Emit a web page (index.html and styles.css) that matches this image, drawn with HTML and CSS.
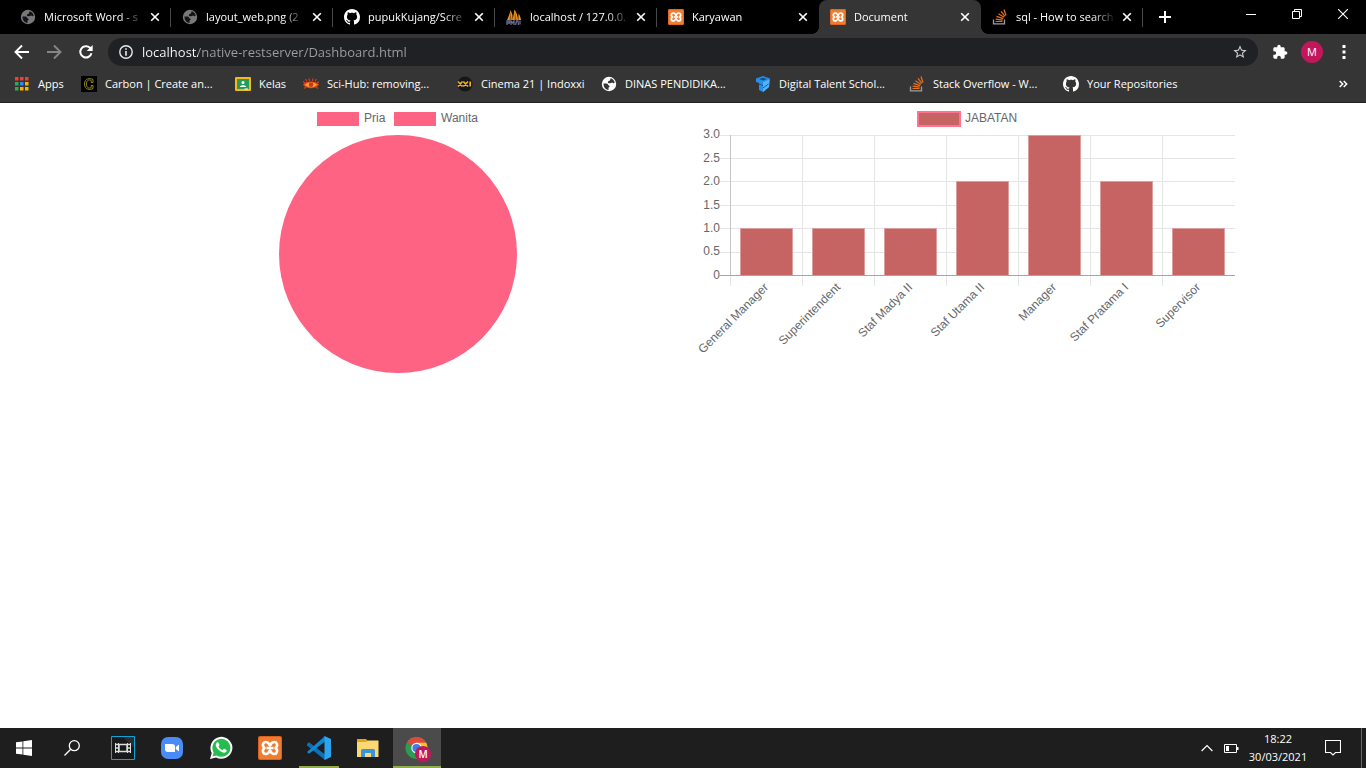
FILE: index.html
```html
<!DOCTYPE html>
<html lang="id">
<head>
<meta charset="utf-8">
<title>Document</title>
<link rel="stylesheet" href="styles.css">
</head>
<body>
<svg class="sprite" aria-hidden="true">
  <symbol id="globe" viewBox="0 0 16 16"><circle cx="8" cy="8" r="7.200" fill="currentColor"/><path d="M2.500 7.500H5.500C7 7.500 7 9.500 8.300 9.700 9 10 8.500 11.300 7.500 11.500V14C4.500 13.500 2.300 11 2.500 7.500ZM9.500 2.200C11.500 2.700 13.300 4.500 13.700 6.500 13 7.500 12 7.200 11.300 6.500 10 6.500 9.500 7.500 8 7.300 6.500 7 6.500 5.500 7.800 5 9 4.700 9.500 3.500 9.500 2.200Z" class="globe-land"/></symbol>
  <symbol id="github" viewBox="0 0 16 16"><path fill="#fff" d="M8 0C3.58 0 0 3.58 0 8c0 3.54 2.29 6.53 5.47 7.59.4.07.55-.17.55-.38 0-.19-.01-.82-.01-1.49-2.01.37-2.53-.49-2.69-.94-.09-.23-.48-.94-.82-1.13-.28-.15-.68-.52-.01-.53.63-.01 1.08.58 1.23.82.72 1.21 1.87.87 2.33.66.07-.52.28-.87.51-1.07-1.78-.2-3.64-.89-3.64-3.95 0-.87.31-1.59.82-2.15-.08-.2-.36-1.02.08-2.12 0 0 .67-.21 2.2.82.64-.18 1.32-.27 2-.27s1.36.09 2 .27c1.53-1.04 2.2-.82 2.2-.82.44 1.1.16 1.92.08 2.12.51.56.82 1.27.82 2.15 0 3.07-1.87 3.75-3.65 3.95.29.25.54.73.54 1.48 0 1.07-.01 1.93-.01 2.2 0 .21.15.46.55.38A8.01 8.01 0 0 0 16 8c0-4.42-3.58-8-8-8z"/></symbol>
  <symbol id="pma" viewBox="0 0 16 16"><path d="M1 11C2.500 8 4 4 4.500 1L6.500 6V11ZM6.500 11C7.500 7 8 3.500 8.500 0.500 10.500 3 11.800 7 12 11ZM12.300 11 12.500 4.500C13.700 6 14.800 8.500 15 11Z" fill="#ef9320"/><path d="M4.500 2.500 5.500 11H3.500ZM9 2.500 10.500 11H8.500Z" fill="#9c5415"/><path d="M1 16V12H3.500V14H1M5 16V12L6.500 14 8 12V16M9.500 16 10.500 12H12L12.500 16M14 11.500V15.500" fill="none" stroke="#666c92" stroke-width="1.300"/></symbol>
  <symbol id="xampp" viewBox="0 0 24 24"><rect width="24" height="24" rx="2" fill="#d9621f"/><rect x="1" y="1" width="22" height="22" rx="2" fill="#f07c30"/><path d="M9 6.300C5 5 3.500 9.500 6.500 12 3.500 14.500 5 19 9 17.700 11.500 17 11 14.500 12 14.500S12.500 17 15 17.700C19 19 20.500 14.500 17.500 12 20.500 9.500 19 5 15 6.300 12.500 7 13 9.500 12 9.500S11.500 7 9 6.300ZM8.500 12H15.500" fill="none" stroke="#fff" stroke-width="2.600" stroke-linejoin="round"/></symbol>
  <symbol id="stack" viewBox="0 0 16 16"><path d="M1.500 10.500V14.800H12.500V10.500" fill="none" stroke="#9c9da0" stroke-width="1.300"/><path d="M3.500 12.500H10.500M3.700 10.200 10.600 11.200M4.500 7.400 11.200 9.600M6.400 4.700 12 8.300M9 2.300 13 7.300M12 0.500 14 6.500" stroke="#e8711c" stroke-width="1.200"/></symbol>
  <symbol id="close" viewBox="0 0 10 10"><path d="M1.200 1.200 8.800 8.800M8.800 1.200 1.200 8.800" stroke="#fff" stroke-width="1.600"/></symbol>
</svg>

<header class="browser">
  <div class="tabstrip">
    <nav class="tabs" aria-label="Tab">
      <div class="tab"><svg class="fav globe-dark"><use href="#globe"/></svg><a href="#" class="tab-title">Microsoft Word - s</a><button class="tab-close" aria-label="Tutup"><svg><use href="#close"/></svg></button></div>
      <div class="tab"><svg class="fav globe-dark"><use href="#globe"/></svg><a href="#" class="tab-title">layout_web.png (2</a><button class="tab-close" aria-label="Tutup"><svg><use href="#close"/></svg></button></div>
      <div class="tab"><svg class="fav"><use href="#github"/></svg><a href="#" class="tab-title">pupukKujang/Scre</a><button class="tab-close" aria-label="Tutup"><svg><use href="#close"/></svg></button></div>
      <div class="tab"><svg class="fav"><use href="#pma"/></svg><a href="#" class="tab-title">localhost / 127.0.0.</a><button class="tab-close" aria-label="Tutup"><svg><use href="#close"/></svg></button></div>
      <div class="tab plain"><svg class="fav"><use href="#xampp"/></svg><a href="#" class="tab-title">Karyawan</a><button class="tab-close" aria-label="Tutup"><svg><use href="#close"/></svg></button></div>
      <div class="tab active"><svg class="fav"><use href="#xampp"/></svg><a href="#" class="tab-title">Document</a><button class="tab-close" aria-label="Tutup"><svg><use href="#close"/></svg></button></div>
      <div class="tab"><svg class="fav"><use href="#stack"/></svg><a href="#" class="tab-title">sql - How to search</a><button class="tab-close" aria-label="Tutup"><svg><use href="#close"/></svg></button></div>
    </nav>
    <button class="new-tab" aria-label="Tab baru"><svg viewBox="0 0 12 12"><path d="M6 0V12M0 6H12" stroke="#fff" stroke-width="2"/></svg></button>
    <div class="window-controls">
      <button aria-label="Kecilkan"><svg viewBox="0 0 10 10"><path d="M0 5.500H10" stroke="#fff"/></svg></button>
      <button aria-label="Pulihkan"><svg viewBox="0 0 10 10"><path d="M2.500 2.500V0.500H9.500V7.500H7.500M0.500 2.500H7.500V9.500H0.500Z" fill="none" stroke="#fff"/></svg></button>
      <button aria-label="Tutup jendela"><svg viewBox="0 0 10 10"><path d="M0 0 10 10M10 0 0 10" stroke="#fff" stroke-width="1.100"/></svg></button>
    </div>
  </div>

  <div class="toolbar">
    <button class="tool" aria-label="Kembali"><svg viewBox="0 0 16 16"><path d="M15 8H2M8 1.500 1.500 8 8 14.500" fill="none" stroke="#fff" stroke-width="1.900"/></svg></button>
    <button class="tool" aria-label="Maju"><svg viewBox="0 0 16 16"><path d="M1 8H14M8 1.500 14.500 8 8 14.500" fill="none" stroke="#868686" stroke-width="1.900"/></svg></button>
    <button class="tool" aria-label="Muat ulang"><svg viewBox="0 0 16 16"><path d="M13.500 9.300A5.700 5.700 0 1 1 12 3.800L13 5" fill="none" stroke="#fff" stroke-width="2"/><path d="M14.700 1V7H8.700Z" fill="#fff"/></svg></button>
    <div class="omnibox">
      <svg class="info" viewBox="0 0 14 14"><circle cx="7" cy="7" r="6.200" fill="none" stroke="#e8eaed" stroke-width="1.400"/><path d="M7 3.200V4.800M7 6V10.700" stroke="#e8eaed" stroke-width="1.600"/></svg>
      <input class="url" type="text" aria-label="Alamat" value="localhost/native-restserver/Dashboard.html">
      <button class="star" aria-label="Bookmark"><svg viewBox="0 0 24 24"><path fill="#d0d0d0" d="M22 9.240l-7.190-.62L12 2 9.190 8.630 2 9.240l5.460 4.730L5.820 21 12 17.270 18.180 21l-1.630-7.030L22 9.240zM12 15.400l-3.760 2.270 1-4.280-3.320-2.880 4.380-.38L12 6.100l1.710 4.040 4.380.38-3.320 2.880 1 4.280L12 15.400z"/></svg></button>
    </div>
    <button class="ext" aria-label="Ekstensi"><svg viewBox="0 0 24 24"><path fill="#fff" d="M20.500 11H19V7c0-1.100-.9-2-2-2h-4V3.500C13 2.120 11.880 1 10.500 1S8 2.120 8 3.500V5H4c-1.100 0-1.990.9-1.990 2v3.800H3.500c1.490 0 2.700 1.210 2.700 2.700s-1.210 2.700-2.700 2.700H2V20c0 1.100.9 2 2 2h3.800v-1.500c0-1.490 1.210-2.700 2.700-2.700 1.490 0 2.700 1.210 2.700 2.700V22H17c1.100 0 2-.9 2-2v-4h1.500c1.380 0 2.500-1.120 2.500-2.500S21.880 11 20.500 11z"/></svg></button>
    <button class="avatar">M</button>
    <button class="more" aria-label="Menu"><svg viewBox="0 0 4 14"><path d="M.5 0h3v3h-3zM.5 5.500h3v3h-3zM.5 11h3v3h-3z" fill="#fff"/></svg></button>
  </div>

  <nav class="bookmarks" aria-label="Bookmark">
    <a href="#" class="mark mark-short"><svg viewBox="0 0 16 16"><path d="M1 1h3.500v3.500H1zM6 1h3.500v3.500H6zM11 1h3.500v3.500h-3.500z" fill="#ea4335"/><path d="M1 6h3.500v3.500H1zM1 11h3.500v3.500H1z" fill="#34a853"/><path d="M6 6h3.500v3.500H6z" fill="#2b8af5"/><path d="M11 6h3.500v3.500h-3.500zM6 11h3.500v3.500H6zM11 11h3.500v3.500h-3.500z" fill="#fbb105"/></svg>Apps</a>
    <a href="#" class="mark mark-long"><svg viewBox="0 0 16 16"><path d="M0 0H16V16H0Z" fill="#000"/><path d="M12 6.500V3.600C9.500 1.800 3.500 2 3.500 8S9.500 14.200 12 12.400V9.500H10.200V11.500C8.400 12.700 5.400 12 5.400 8S8.400 3.300 10.200 4.500V6.500Z" fill="none" stroke="#a39522" stroke-width=".9"/></svg>Carbon | Create an...</a>
    <a href="#" class="mark mark-kelas"><svg viewBox="0 0 16 16"><rect y="1" width="16" height="14" rx="1" fill="#f6b814"/><path d="M2 3H14V13H2Z" fill="#259a5b"/><circle cx="8" cy="6.500" r="1.500" fill="#fff"/><path d="M4.800 11C5 8.500 11 8.500 11.200 11Z" fill="#fff"/><path d="M9.500 12.500H13V13.500H9.500Z" fill="#fff"/></svg>Kelas</a>
    <a href="#" class="mark mark-long"><svg viewBox="0 0 16 16"><path d="M0 8.500C3 4.500 13 4.500 16 8.500 13 13.500 3 13.500 0 8.500Z" fill="#e7491e"/><path d="M4 5.500 2.500 3M6.500 5 6 2.300M9.500 5 10 2.300M12 5.500 13.500 3M2 7 0 5.500M14 7 16 5.500M3 11 1 12.500M13 11 15 12.500" stroke="#d83b1b" stroke-width="1.200"/><path d="M2 8.700C5 5.800 11 5.800 14 8.700 11 12 5 12 2 8.700Z" fill="#f6a623"/><circle cx="8" cy="8.700" r="2.300" fill="#c9381a"/></svg>Sci-Hub: removing...</a>
    <a href="#" class="mark mark-mid"><svg viewBox="0 0 16 16"><circle cx="8" cy="8" r="7.500" fill="#171717"/><path d="M1 5.500 5.500 10.500M5.500 5.500 1 10.500M6.300 5.500 11 10.500M11 5.500 6.300 10.500M13.200 5.500V10.500" stroke="#efad24" stroke-width="1.700"/></svg>Cinema 21 | Indoxxi</a>
    <a href="#" class="mark mark-long globe-light"><svg><use href="#globe"/></svg>DINAS PENDIDIKA...</a>
    <a href="#" class="mark mark-long"><svg viewBox="0 0 16 16"><path d="M1 2.500 8 0 15 2.500 14 11 8 16 4 14V7L1 6Z" fill="#248ee8"/><path d="M4 3 8 1.700 12 3 8 4.500Z" fill="#174e80"/><path d="M8 6 14.500 3.500 14 11 8 16Z" fill="#53b2f8"/><path d="M4 8 8 9.500M8 12 13.500 8" stroke="#0d5aa6"/></svg>Digital Talent Schol...</a>
    <a href="#" class="mark mark-long"><svg><use href="#stack"/></svg>Stack Overflow - W...</a>
    <a href="#" class="mark"><svg><use href="#github"/></svg>Your Repositories</a>
    <button class="overflow" aria-label="Bookmark lainnya"><svg viewBox="0 0 9 8"><path d="M.7 1 3.700 4 .7 7M4.700 1 7.700 4 4.700 7" fill="none" stroke="#fff" stroke-width="1.500"/></svg></button>
  </nav>
</header>

<main class="container">
  <section class="chart">
    <svg viewBox="0 0 540 270" role="img" aria-label="Pria dan Wanita">
      <path class="pink" d="M189 9H231V23H189ZM266 9H308V23H266Z"/>
      <text x="236" y="19">Pria</text>
      <text x="313" y="19">Wanita</text>
      <circle class="pink" cx="270" cy="151" r="119"/>
    </svg>
  </section>
  <section class="chart">
    <svg viewBox="0 0 540 270" role="img" aria-label="Jabatan">
      <rect class="legend-box" x="220" y="9" width="42" height="14"/>
      <text x="267" y="19">JABATAN</text>
      <path class="grid" d="M22 32.500H537M22 55.500H537M22 78.500H537M22 102.500H537M22 125.500H537M22 149.500H537M104.500 32V183M176.500 32V183M248.500 32V183M320.500 32V183M392.500 32V183M464.500 32V183M32.500 173V183"/>
      <path class="axis-y" d="M32.500 32V172"/>
      <g class="bars">
        <path d="M42.500 172V125.500H94.500V172"/>
        <path d="M114.500 172V125.500H166.500V172"/>
        <path d="M186.500 172V125.500H238.500V172"/>
        <path d="M258.500 172V78.500H310.500V172"/>
        <path d="M330.500 172V32.500H382.500V172"/>
        <path d="M402.500 172V78.500H454.500V172"/>
        <path d="M474.500 172V125.500H526.500V172"/>
      </g>
      <path class="axis-x" d="M22 172.500H537"/>
      <g class="ticks">
        <text x="22" y="35">3.0</text><text x="22" y="59">2.5</text><text x="22" y="82">2.0</text><text x="22" y="106">1.5</text><text x="22" y="129">1.0</text><text x="22" y="152">0.5</text><text x="22" y="176">0</text>
      </g>
      <g class="ticks">
        <text transform="translate(71 185) rotate(-45)">General Manager</text>
        <text transform="translate(143 185) rotate(-45)">Superintendent</text>
        <text transform="translate(215 185) rotate(-45)">Staf Madya II</text>
        <text transform="translate(287 185) rotate(-45)">Staf Utama II</text>
        <text transform="translate(359 185) rotate(-45)">Manager</text>
        <text transform="translate(431 185) rotate(-45)">Staf Pratama I</text>
        <text transform="translate(503 185) rotate(-45)">Supervisor</text>
      </g>
    </svg>
  </section>
</main>

<footer class="taskbar">
  <button class="task" aria-label="Start"><svg viewBox="0 0 16 16" class="i16"><path fill="#fff" d="M0 2.300 6.500 1.400V7.600H0ZM7.300 1.300 16 0V7.600H7.300ZM0 8.400H6.500V14.600L0 13.700ZM7.300 8.400H16V16L7.300 14.700Z"/></svg></button>
  <button class="task" aria-label="Cari"><svg viewBox="0 0 16 16" class="i16"><circle cx="10.300" cy="5.700" r="5" fill="none" stroke="#fff" stroke-width="1.300"/><path d="M6.700 9.300.5 15.500" stroke="#fff" stroke-width="1.300"/></svg></button>
  <div class="apps">
    <button class="task" aria-label="Film"><svg viewBox="0 0 24 24"><path d="M.5.5H23.500V23.500H.5Z" fill="#17191b" stroke="#0da4d7"/><path d="M12 1H23V12Z" fill="#2b2d2f"/><path d="M8 8.500H16V15.500H8Z" fill="none" stroke="#ddd" stroke-width="1.500"/><path d="M4.500 7V17M7.500 7V17M16.500 7V17M19.500 7V17" stroke="#ddd"/><path d="M4 8.500H8M4 12H8M4 15.500H8M16 8.500H20M16 12H20M16 15.500H20" stroke="#ddd" stroke-width="1.300"/></svg></button>
    <button class="task" aria-label="Zoom"><svg viewBox="0 0 24 24"><rect x="1" y="1" width="22" height="22" rx="7" fill="#4a8cf7"/><path d="M5 8H12C14 8 15 9 15 10.500V16H8C6 16 5 15 5 13.500ZM15.800 11 19 8.500V15.500L15.800 13Z" fill="#fff"/></svg></button>
    <button class="task" aria-label="WhatsApp"><svg viewBox="0 0 24 24"><path d="M1 23 2.700 17A11 11 0 1 1 7 21.400Z" fill="#fff"/><path d="M3.500 20.500 4.700 16.500A9 9 0 1 1 7.700 19.500Z" fill="#25bd4f"/><path d="M8 6.500C9 6 9.500 6.500 9.700 7.200L10.400 9C10.500 9.700 9.800 10.200 9.500 10.700 10.300 12.200 11.800 13.500 13.500 14.200L14.700 12.900C15 12.700 15.400 12.900 15.700 13L17.500 14C18 14.300 17.500 15.800 16.700 16.300 14 18 7.500 13.500 6.800 9.500 6.600 8.300 7.200 7 8 6.500Z" fill="#fff"/></svg></button>
    <button class="task" aria-label="XAMPP"><svg><use href="#xampp"/></svg></button>
    <button class="task open" aria-label="Visual Studio Code"><svg viewBox="0 0 24 24"><path d="M0 8 2 6.300 18 18.500V24L0 9.500Z" fill="#0b71bd"/><path d="M0 16 18 0V5.500L2 17.700 0 16Z" fill="#1187d5"/><path d="M17.500 0 24 3V21L17.500 24Z" fill="#2ba6ee"/></svg></button>
    <button class="task" aria-label="File Explorer"><svg viewBox="0 0 24 24"><path d="M1 3H10L12 5H21V8H1Z" fill="#e6a21a"/><path d="M1 6H10L12 4.500H22.500V21H1Z" fill="#fbd872"/><path d="M5 21V14.500Q5 13 6.500 13H17.500Q19 13 19 14.500V21H15V17H9V21Z" fill="#3b94d5"/></svg></button>
    <button class="task open current" aria-label="Google Chrome"><svg viewBox="0 0 24 24"><circle cx="11.500" cy="12" r="11" fill="#2c9d50"/><path d="M11.500 12 2 6.500A11 11 0 0 1 21 6.500Z" fill="#df4a3c"/><path d="M11.500 6.800H21.200A11 11 0 0 1 11.500 23L16 14.500Z" fill="#f6c52d"/><circle cx="11.500" cy="12" r="5.200" fill="#fff"/><circle cx="11.500" cy="12" r="4.100" fill="#3f7de4"/></svg><span class="badge">M</span></button>
  </div>
  <div class="tray">
    <button class="tray-button" aria-label="Ikon tersembunyi"><svg viewBox="0 0 12 8" class="chevron"><path d="M.6 7 6 1.500 11.400 7" fill="none" stroke="#fff" stroke-width="1.200"/></svg></button>
    <button class="tray-button" aria-label="Baterai"><svg viewBox="0 0 16 9" class="battery"><path d="M1.500.5H13.500V8.500H1.500Z" fill="none" stroke="#fff"/><path d="M3 2H6V7H3ZM14 3H15.500V6H14Z" fill="#fff"/></svg></button>
    <button class="clock"><time>18:22</time><time>30/03/2021</time></button>
    <button class="tray-button" aria-label="Notifikasi"><svg viewBox="0 0 16 16" class="i16"><path d="M.5.5H15.500V12.500H10.500L8 15 5.500 12.500H.5Z" fill="none" stroke="#fff" stroke-width="1.100"/></svg></button>
  </div>
</footer>
</body>
</html>
```
FILE: styles.css
```css
* { box-sizing: border-box; }

body {
  margin: 0;
  min-height: 100vh;
  display: flex;
  flex-direction: column;
  background: #fff;
  font: 11px/16px "Open Sans", "Noto Sans", sans-serif;
}

button {
  display: flex;
  align-items: center;
  justify-content: center;
  padding: 0;
  border: 0;
  background: none;
  color: #fff;
  font: inherit;
}

a { color: #fff; text-decoration: none; }
svg { display: block; flex: none; }
.sprite { position: absolute; width: 0; height: 0; }

.browser { background: #353535; color: #fff; border-bottom: 1px solid #232323; }

/* Tab strip */
.tabstrip { display: flex; height: 34px; background: #000; }
.tabs { display: flex; padding-left: 9px; min-width: 0; }
.tab {
  display: flex;
  align-items: center;
  width: 162px;
  padding: 0 11px;
  position: relative;
}
.tab::after {
  content: "";
  position: absolute;
  right: 0;
  top: 8px;
  width: 1px;
  height: 19px;
  background: #48494b;
}
.tab.plain::after, .tab.active::after { display: none; }
.tab.active { background: #353535; border-radius: 8px 8px 0 0; }
.tab.active::before {
  content: "";
  position: absolute;
  left: -8px;
  right: -8px;
  bottom: 0;
  height: 8px;
  background:
    radial-gradient(circle at 0 0, transparent 8px, #353535 8px) left / 8px 8px no-repeat,
    radial-gradient(circle at 100% 0, transparent 8px, #353535 8px) right / 8px 8px no-repeat;
}
.fav { width: 16px; height: 16px; margin-right: 8px; }
.globe-dark { color: #77797d; --land: #141414; }
.globe-light svg { color: #fff; --land: #353535; }
.globe-land { fill: var(--land); }
.tab-title {
  flex: 1;
  min-width: 0;
  overflow: hidden;
  white-space: nowrap;
  mask-image: linear-gradient(to right, #000 calc(100% - 24px), transparent);
}
.tab-close { width: 10px; height: 10px; margin-left: 6px; }
.tab-close svg { width: 10px; height: 10px; }
.new-tab { width: 28px; margin-left: 8px; }
.new-tab svg { width: 12px; height: 12px; }
.window-controls { display: flex; margin-left: auto; height: 28px; }
.window-controls button { width: 46px; }
.window-controls svg { width: 10px; height: 10px; }

/* Toolbar */
.toolbar { display: flex; align-items: center; height: 36px; padding: 4px 16px 4px 6px; }
.tool { width: 32px; height: 28px; }
.tool svg { width: 16px; height: 16px; }
.omnibox {
  display: flex;
  align-items: center;
  flex: 1;
  height: 28px;
  margin-left: 6px;
  padding: 0 10px 0 11px;
  border-radius: 14px;
  background: #202124;
}
.info { width: 14px; height: 14px; margin-right: 9px; }
.url {
  flex: 1;
  min-width: 0;
  padding: 0;
  border: 0;
  outline: 0;
  font: 13px/20px "Open Sans", "Noto Sans", sans-serif;
  color: transparent;
  background: linear-gradient(to right, #fff 56px, #9aa0a6 56px);
  background-clip: text;
}
.star svg { width: 16px; height: 16px; }
.ext { width: 16px; margin-left: 14px; }
.ext svg { width: 16px; height: 16px; }
.avatar {
  width: 22px;
  height: 22px;
  margin-left: 13px;
  border-radius: 50%;
  background: #c2185b;
}
.more { width: 12px; margin-left: 15px; }
.more svg { width: 4px; height: 14px; }

/* Bookmarks */
.bookmarks { display: flex; align-items: center; gap: 16px; height: 32px; padding: 0 18px 4px 14px; }
.mark { display: flex; align-items: center; gap: 8px; white-space: nowrap; }
.mark svg { width: 16px; height: 16px; }
.mark-short { width: 51px; }
.mark-kelas { width: 52px; }
.mark-mid { width: 128px; }
.mark-long { width: 138px; }
.overflow { margin-left: auto; }
.overflow svg { width: 9px; height: 8px; }

/* Charts */
.container {
  flex: 1;
  display: grid;
  grid-template-columns: 1fr 1fr;
  gap: 30px;
  align-items: start;
  width: 100%;
  max-width: 1140px;
  margin: 0 auto;
  padding: 0 15px;
}
.chart svg {
  width: 100%;
  overflow: visible;
  fill: #666;
  font: 12px "Liberation Sans", Arial, sans-serif;
}
.chart .pink { fill: #ff6384; }
.chart .legend-box { fill: #c66363; stroke: #ff7391; stroke-width: 2; }
.grid, .axis-x, .axis-y { fill: none; stroke: #e5e5e5; }
.axis-y { stroke: #c4c4c4; }
.axis-x { stroke: #a6a6a6; }
.bars { fill: #c66363; stroke: #dc9d9d; }
.ticks { text-anchor: end; }

/* Taskbar */
.taskbar { display: flex; height: 40px; background: #1e1e1e; color: #fff; }
.task { width: 48px; position: relative; }
.task svg { width: 24px; height: 24px; }
.task .i16, .i16 { width: 16px; height: 16px; }
.apps { display: flex; gap: 1px; margin-left: 3px; }
.open::after {
  content: "";
  position: absolute;
  left: 4px;
  right: 4px;
  bottom: 0;
  height: 2px;
  background: #91ad4b;
}
.current { background: #4b4b4b; }
.current::after { left: 0; right: 0; }
.badge {
  position: absolute;
  right: 10px;
  bottom: 6px;
  width: 16px;
  height: 16px;
  border-radius: 50%;
  background: #c2185b;
  font-size: 10px;
  font-weight: 600;
}
.tray {
  display: flex;
  align-items: center;
  margin: 0 4px 0 auto;
  padding-right: 16px;
  border-right: 1px solid #666;
}
.tray-button { width: 24px; height: 40px; }
.chevron { width: 12px; height: 8px; }
.battery { width: 16px; height: 9px; }
.clock { flex-direction: column; width: 70px; line-height: 18px; }
.clock + .tray-button { margin-left: 8px; }
```
